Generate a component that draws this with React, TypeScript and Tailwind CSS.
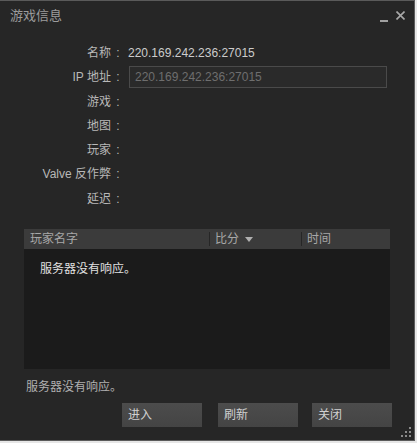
const FONT = { fontFamily: '"Liberation Sans", Arial, "Noto Sans CJK SC", sans-serif' };

const rows: { label: string; value?: string; input?: boolean; h: string }[] = [
  { label: "名称", value: "220.169.242.236:27015", h: "h-[24px]" },
  { label: "IP 地址", input: true, h: "h-[24px]" },
  { label: "游戏", h: "h-[25px]" },
  { label: "地图", h: "h-[24px]" },
  { label: "玩家", h: "h-[23px]" },
  { label: "Valve 反作弊", h: "h-[25px]" },
  { label: "延迟", h: "h-[26px]" },
];

function GameButton({ label }: { label: string }) {
  return (
    <button className="h-[24px] w-[80px] bg-gradient-to-b from-[#4c4c4c] to-[#444444] px-[6px] text-left text-[12px] text-[#d0d0d0]">
      {label}
    </button>
  );
}

export default function App() {
  return (
    <div className="h-[443px] w-[417px] bg-[#e6e6e6]" style={FONT}>
      <div className="relative flex h-[441px] w-[415px] flex-col border-t border-r border-b border-[#5a5a5a] bg-[#262626]">
        {/* title bar */}
        <div className="flex h-[30px] items-center justify-between pl-[10px] pr-[9px]">
          <span className="text-[13px] text-[#9c9c9c]">游戏信息</span>
          <div className="flex items-center gap-[8px]">
            <span className="mt-[9px] block h-[2px] w-[8px] bg-[#a0a0a0]" />
            <svg width="9" height="9" viewBox="0 0 9 9" className="mb-[1px]">
              <path d="M0.5 0.5 L8.5 8.5 M8.5 0.5 L0.5 8.5" stroke="#a8a8a8" strokeWidth="1.6" />
            </svg>
          </div>
        </div>

        {/* info rows */}
        <div className="mt-[10px] flex flex-col">
          {rows.map((r) => (
            <div key={r.label} className={`flex items-center ${r.h}`}>
              <span className="w-[111px] text-right text-[12px] text-[#b8b8b8]">{r.label}</span>
              <span className="w-[14px] text-center text-[12px] text-[#b8b8b8]">:</span>
              {r.value && <span className="ml-[3px] text-[12px] text-[#cccccc]">{r.value}</span>}
              {r.input && (
                <div className="ml-[4px] flex h-[22px] w-[258px] items-center border border-[#4a4a4a] bg-[#2a2a2a] px-[5px] text-[12px] text-[#6e6e6e]">
                  220.169.242.236:27015
                </div>
              )}
            </div>
          ))}
        </div>

        {/* player table */}
        <div className="mx-[24px] mt-[17px] flex h-[140px] flex-col bg-[#1b1b1b]">
          <div className="flex h-[20px] items-center bg-[#3b3b3b] text-[12px] text-[#a8a8a8]">
            <span className="w-[185px] pl-[6px]">玩家名字</span>
            <span className="h-[14px] w-px bg-[#262626]" />
            <span className="flex w-[91px] items-center gap-[6px] pl-[5px]">
              比分
              <svg width="8" height="5" viewBox="0 0 8 5">
                <path d="M0 0 H8 L4 5 Z" fill="#b0b0b0" />
              </svg>
            </span>
            <span className="h-[14px] w-px bg-[#262626]" />
            <span className="pl-[5px]">时间</span>
          </div>
          <div className="pl-[16px] pt-[11px] text-[12px] text-[#e0e0e0]">服务器没有响应。</div>
        </div>

        <div className="mt-[9px] pl-[26px] text-[12px] text-[#b0b0b0]">服务器没有响应。</div>

        <div className="mt-[7px] flex pl-[122px]">
          <GameButton label="进入" />
          <div className="w-[16px]" />
          <GameButton label="刷新" />
          <div className="w-[14px]" />
          <GameButton label="关闭" />
        </div>

        {/* resize grip */}
        <svg width="10" height="10" viewBox="0 0 10 10" className="absolute right-[3px] bottom-[3px]">
          <rect x="8" y="0" width="2" height="2" fill="#8a8a8a" />
          <rect x="4" y="4" width="2" height="2" fill="#8a8a8a" />
          <rect x="8" y="4" width="2" height="2" fill="#8a8a8a" />
          <rect x="0" y="8" width="2" height="2" fill="#8a8a8a" />
          <rect x="4" y="8" width="2" height="2" fill="#8a8a8a" />
          <rect x="8" y="8" width="2" height="2" fill="#8a8a8a" />
        </svg>
      </div>
    </div>
  );
}
